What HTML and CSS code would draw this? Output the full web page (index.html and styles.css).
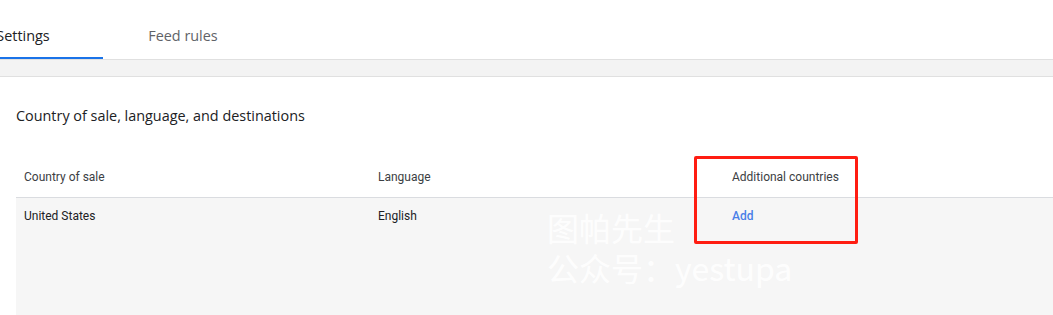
FILE: index.html
```html
<!DOCTYPE html>
<html>
<head>
<meta charset="utf-8">
<link rel="stylesheet" href="styles.css">
</head>
<body>
<div class="page">
  <nav class="tabs">
    <div class="tab active">Settings</div>
    <div class="tab">Feed rules</div>
  </nav>
  <div class="band"></div>
  <section class="section">
    <h2 class="title">Country of sale, language, and destinations</h2>
    <div class="table">
      <div class="row head">
        <div class="cell">Country of sale</div>
        <div class="cell">Language</div>
        <div class="cell">Additional countries</div>
      </div>
      <div class="row body">
        <div class="cell">United States</div>
        <div class="cell">English</div>
        <div class="cell"><a class="link">Add</a></div>
      </div>
    </div>
  </section>
  <div class="highlight"></div>
  <div class="watermark">图帕先生<br>公众号：yestupa</div>
</div>
</body>
</html>
```
FILE: styles.css
```css
html, body {
  margin: 0;
  padding: 0;
  background: #fff;
  overflow: hidden;
}
.page {
  position: relative;
  width: 1053px;
  height: 315px;
  overflow: hidden;
  font-family: Roboto, "Liberation Sans", sans-serif;
}
.tabs {
  display: flex;
  margin-left: -57px;
  height: 59px;
  border-bottom: 1px solid #e0e0e0;
  box-sizing: content-box;
}
.tab {
  width: 160px;
  height: 59px;
  box-sizing: border-box;
  display: flex;
  align-items: center;
  justify-content: center;
  padding-top: 13px;
  font-family: "Open Sans", "Noto Sans", sans-serif;
  font-size: 14.4px;
  color: #5f6368;
  border-bottom: 2px solid transparent;
}
.tab.active {
  color: #202124;
  border-bottom-color: #1a73e8;
}
.band {
  height: 16px;
  background: #f3f3f3;
  border-bottom: 1px solid #e0e0e0;
}
.section {
  padding-left: 16px;
}
.title {
  margin: 0;
  padding-top: 30px;
  height: 18px;
  line-height: 18px;
  font-family: "Open Sans", "Noto Sans", sans-serif;
  font-weight: 400;
  font-size: 14.4px;
  color: #202124;
}
.table {
  margin-top: 34px;
}
.row {
  display: grid;
  grid-template-columns: 354px 354px 1fr;
}
.row.head {
  height: 38px;
  border-bottom: 1px solid #dadce0;
}
.row.body {
  height: 120px;
  background: #f6f6f6;
}
.cell {
  padding: 0 8px;
  font-size: 12px;
  line-height: 14px;
}
.head .cell {
  padding-top: 11px;
  color: #3c4043;
}
.body .cell {
  padding-top: 11px;
  color: #202124;
}
.link {
  color: #4a80e8;
  font-weight: 500;
}
.highlight {
  position: absolute;
  left: 694px;
  top: 156px;
  width: 164px;
  height: 88px;
  box-sizing: border-box;
  border: 3px solid #ff1d12;
  border-radius: 2px;
}
.watermark {
  position: absolute;
  left: 547px;
  top: 207px;
  font-family: "Noto Sans CJK SC", "Noto Sans", sans-serif;
  font-size: 32px;
  line-height: 40px;
  color: rgba(255, 255, 255, 0.9);
}
```
